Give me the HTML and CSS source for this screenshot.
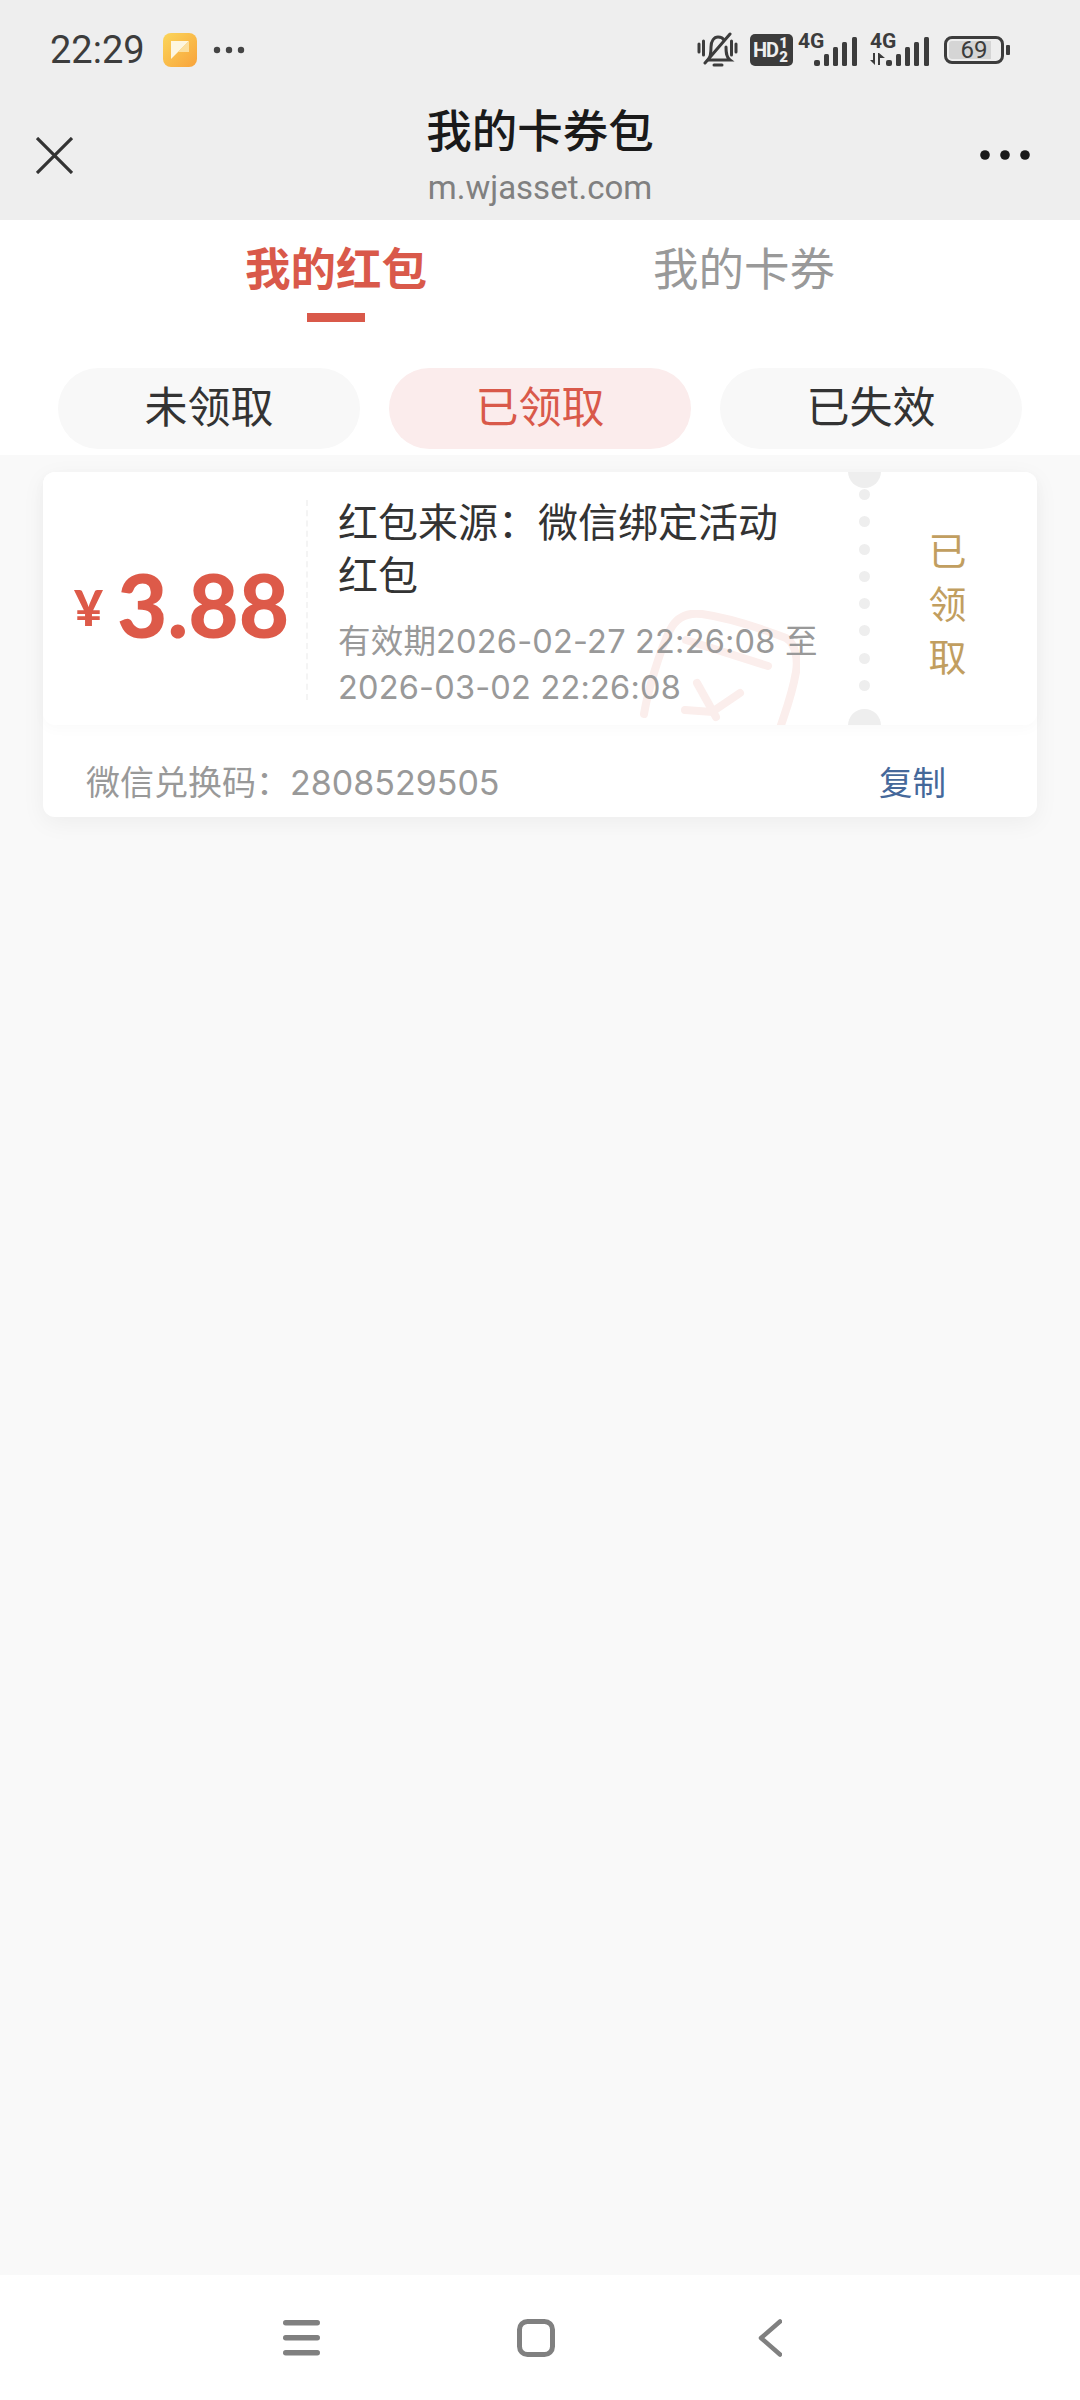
FILE: index.html
```html
<!DOCTYPE html>
<html lang="zh-CN">
<head>
    <meta charset="UTF-8">
    <meta name="viewport" content="width=device-width, initial-scale=1.0">
    <title>我的卡券包</title>
    <link rel="stylesheet" href="styles.css">
</head>
<body>
    <div class="top-bar">
        <div class="status-bar">
            <div class="status-left">
                <span class="time">22:29</span>
                <svg class="app-icon" width="34" height="34" viewBox="0 0 34 34">
                    <defs>
                        <linearGradient id="appBg" x1="0" y1="0" x2="1" y2="1">
                            <stop offset="0" stop-color="#fbd65a"/>
                            <stop offset="1" stop-color="#f8a23a"/>
                        </linearGradient>
                    </defs>
                    <rect width="34" height="34" rx="8" fill="url(#appBg)"/>
                    <path d="M8 8H26L8 26Z" fill="#fdf6e0"/>
                    <path d="M26 8V19H15Z" fill="#fbdf9e"/>
                </svg>
                <svg width="32" height="8" viewBox="0 0 32 8"><circle cx="4" cy="4" r="3.2" fill="#444"/><circle cx="16" cy="4" r="3.2" fill="#444"/><circle cx="28" cy="4" r="3.2" fill="#444"/></svg>
            </div>
            <div class="status-right">
                <svg class="bell" width="41" height="36" viewBox="0 0 41 36" fill="none" stroke="#3c3c3c" stroke-width="3" stroke-linecap="round">
                    <path d="M2 12V20M6.500 9V23M39 12V20M34.500 9V23"/>
                    <path d="M11 28C14 25 14 20 14 15C14 9 17 5 21 5C24 5 26 6 27 8M29 15C29 20 29 25 33 28H11"/>
                    <path d="M17 33H25"/>
                    <path d="M8 31L33 2"/>
                </svg>
                <div class="hd-badge"><span class="hd-text">HD</span><span class="hd-sims"><b>1</b><b>2</b></span></div>
                <div class="signal">
                    <span class="net-label">4G</span>
                    <svg width="44" height="29" viewBox="0 0 44 29" fill="#3c3c3c"><rect x="0" y="23" width="6" height="6" rx="2"/><rect x="10" y="17" width="5" height="12" rx="1.500"/><rect x="19" y="10" width="5" height="19" rx="1.500"/><rect x="28" y="5" width="5" height="24" rx="1.500"/><rect x="38" y="0" width="5" height="29" rx="1.500"/></svg>
                </div>
                <div class="signal">
                    <span class="net-label">4G</span>
                    <svg class="updown" width="15" height="12" viewBox="0 0 15 12" fill="#3c3c3c"><path d="M5 0V12L0 7H3V0ZM8 0V12H10V5H15L9 0Z"/></svg>
                    <svg width="44" height="29" viewBox="0 0 44 29" fill="#3c3c3c"><rect x="0" y="23" width="6" height="6" rx="2"/><rect x="10" y="17" width="5" height="12" rx="1.500"/><rect x="19" y="10" width="5" height="19" rx="1.500"/><rect x="28" y="5" width="5" height="24" rx="1.500"/><rect x="38" y="0" width="5" height="29" rx="1.500"/></svg>
                </div>
                <div class="battery">
                    <div class="battery-body"><div class="battery-fill"></div><span class="battery-num">69</span></div>
                    <div class="battery-nub"></div>
                </div>
            </div>
        </div>
        <div class="nav-bar">
            <svg class="close" width="37" height="37" viewBox="0 0 37 37" stroke="#333" stroke-width="3.200"><path d="M1 1L36 36M36 1L1 36"/></svg>
            <div class="nav-title">
                <div class="title">我的卡券包</div>
                <div class="url">m.wjasset.com</div>
            </div>
            <svg class="more" width="50" height="10" viewBox="0 0 50 10" fill="#1a1a1a"><circle cx="5" cy="5" r="4.800"/><circle cx="25" cy="5" r="4.800"/><circle cx="45" cy="5" r="4.800"/></svg>
        </div>
    </div>

    <div class="filters">
        <div class="tabs">
            <div class="tab active">我的红包</div>
            <div class="tab">我的卡券</div>
        </div>
        <div class="pills">
            <div class="pill">未领取</div>
            <div class="pill selected">已领取</div>
            <div class="pill">已失效</div>
        </div>
    </div>

    <main class="content">
        <div class="card">
            <div class="ticket">
                <div class="amount"><span class="yen">¥</span><span class="value">3.88</span></div>
                <div class="info">
                    <div class="source">红包来源：微信绑定活动<br>红包</div>
                    <div class="validity">有效期2026-02-27 22:26:08 至<br>2026-03-02 22:26:08</div>
                </div>
                <div class="perforation">
                    <i></i><i></i><i></i><i></i><i></i><i></i><i></i><i></i>
                </div>
                <div class="stub">已<br>领<br>取</div>
                <svg class="stamp" width="160" height="116" viewBox="0 0 160 116" fill="none" stroke="#fbeeec" stroke-width="8" stroke-linecap="round">
                    <path d="M4 104C8 80 20 40 30 20C36 8 46 2 62 4C90 8 125 20 146 28C156 34 158 50 156 62C152 85 146 100 140 118"/>
                    <path d="M57 73L76 107"/>
                    <path d="M100 83L72 102L45 100"/>
                    <path d="M46 30L128 56"/>
                </svg>
                <div class="notch notch-top"></div>
                <div class="notch notch-bottom"></div>
            </div>
            <div class="code-row">
                <span class="code">微信兑换码：2808529505</span>
                <span class="copy">复制</span>
            </div>
        </div>
    </main>

    <div class="sys-nav">
        <svg width="37" height="36" viewBox="0 0 37 36" fill="#808080"><rect y="0" width="37" height="5.500" rx="2.700"/><rect y="15" width="37" height="5.500" rx="2.700"/><rect y="30" width="37" height="5.500" rx="2.700"/></svg>
        <svg class="home" width="38" height="38" viewBox="0 0 38 38" fill="none" stroke="#808080" stroke-width="5"><rect x="2.500" y="2.500" width="33" height="33" rx="8"/></svg>
        <svg class="back" width="24" height="38" viewBox="0 0 24 38" fill="none" stroke="#808080" stroke-width="4.500" stroke-linecap="round" stroke-linejoin="round"><path d="M22 2.500L3 19L22 35.500"/></svg>
    </div>
</body>
</html>
```

FILE: styles.css
```css
* {
    box-sizing: border-box;
}
body {
    margin: 0;
    width: 1080px;
    height: 2400px;
    display: flex;
    flex-direction: column;
    background: #f9f9f9;
    color: #222;
    font-family: Roboto, "Noto Sans CJK SC", sans-serif;
}
.top-bar {
    height: 220px;
    background: #eeeeee;
    flex-shrink: 0;
}
.status-bar {
    height: 100px;
    padding: 0 70px 0 50px;
    display: flex;
    justify-content: space-between;
    align-items: center;
}
.status-left {
    display: flex;
    align-items: center;
}
.time {
    font-size: 38px;
    color: #3c3c3c;
    width: 113px;
}
.app-icon {
    margin-right: 16px;
}
.status-right {
    display: flex;
    align-items: center;
    color: #3c3c3c;
}
.bell {
    margin-right: 12px;
}
.hd-badge {
    width: 43px;
    height: 32px;
    margin-right: 5px;
    padding-left: 3px;
    display: flex;
    align-items: center;
    background: #3c3c3c;
    border-radius: 5px;
    color: #eee;
    font-weight: 700;
    font-size: 20px;
    line-height: 1;
}
.hd-text {
    letter-spacing: -1px;
}
.hd-sims {
    margin-left: 1px;
    display: flex;
    flex-direction: column;
    font-size: 15px;
    line-height: 14px;
}
.hd-sims b {
    display: block;
}
.signal {
    position: relative;
    width: 60px;
    height: 32px;
    margin-right: 12px;
    display: flex;
    justify-content: flex-end;
    align-items: flex-end;
}
.net-label {
    position: absolute;
    left: 0;
    top: -2px;
    font-size: 21px;
    font-weight: 700;
    line-height: 18px;
}
.updown {
    position: absolute;
    left: 0;
    bottom: 1px;
}
.battery {
    display: flex;
    align-items: center;
    gap: 2px;
    margin-left: 2px;
}
.battery-body {
    position: relative;
    width: 60px;
    height: 28px;
    border: 3px solid #3c3c3c;
    border-radius: 8px;
    padding: 2px;
}
.battery-fill {
    width: 42px;
    height: 100%;
    background: #d5d5d5;
    border-radius: 3px 0 0 3px;
}
.battery-num {
    position: absolute;
    inset: 0;
    text-align: center;
    font-size: 24px;
    line-height: 22px;
}
.battery-nub {
    width: 4px;
    height: 10px;
    background: #3c3c3c;
    border-radius: 1px;
}
.nav-bar {
    height: 120px;
    padding: 0 36px 10px;
    display: grid;
    grid-template-columns: 1fr auto 1fr;
    align-items: center;
}
.more {
    justify-self: end;
    margin-right: 14px;
}
.nav-title {
    text-align: center;
    margin-top: 2px;
}
.title {
    font-size: 45.500px;
    line-height: 58px;
    color: #1a1a1a;
    font-weight: 500;
}
.url {
    font-size: 33px;
    line-height: 40px;
    margin-top: 6px;
    color: #808080;
}

.filters {
    height: 235px;
    background: #fff;
    flex-shrink: 0;
}
.tabs {
    height: 148px;
    padding-top: 22px;
    display: flex;
    justify-content: center;
}
.tab {
    position: relative;
    width: 408px;
    height: 58px;
    text-align: center;
    font-size: 45.500px;
    line-height: 58px;
    color: #999;
}
.tab.active {
    color: #d9594a;
    font-weight: 700;
}
.tab.active::after {
    content: "";
    position: absolute;
    left: 175px;
    top: 71px;
    width: 58px;
    height: 9px;
    background: #d9594a;
}
.pills {
    padding: 0 58px;
    display: flex;
    gap: 29px;
}
.pill {
    flex: 1;
    height: 81px;
    border-radius: 41px;
    background: #f8f8f8;
    text-align: center;
    font-size: 43px;
    line-height: 80px;
    color: #333;
}
.pill.selected {
    background: #fbecec;
    color: #d9594a;
}

.content {
    flex: 1;
    padding: 17px 43px 0;
}
.card {
    background: #fff;
    border-radius: 12px;
    box-shadow: 0 6px 24px rgba(0, 0, 0, 0.05);
}
.ticket {
    position: relative;
    height: 253px;
    display: flex;
    overflow: hidden;
    border-radius: 12px;
    background: #fff;
    box-shadow: 0 4px 14px rgba(0, 0, 0, 0.025);
}
.amount {
    width: 263px;
    padding: 12px 0 0 31px;
    display: flex;
    align-items: center;
    color: #dd5a49;
    font-family: Lato, sans-serif;
    font-weight: 900;
    white-space: nowrap;
}
.yen {
    font-size: 50px;
    margin-right: 14px;
    margin-top: 4px;
}
.value {
    font-size: 87px;
}
.info {
    position: relative;
    z-index: 1;
    width: 558px;
    margin: 28px 0 25px;
    padding: 0 0 0 30px;
    border-left: 2px dashed #f4f4f4;
    white-space: nowrap;
}
.source {
    font-size: 40px;
    line-height: 53px;
    color: #333;
    margin-top: -3px;
}
.validity {
    font-family: Inter, "Noto Sans CJK SC", sans-serif;
    font-size: 32.500px;
    letter-spacing: 0.200px;
    line-height: 46px;
    color: #999;
    margin-top: 16px;
}
.perforation {
    width: 11px;
    margin: 17px 0 0 -5px;
    display: flex;
    flex-direction: column;
    gap: 16.300px;
}
.perforation i {
    display: block;
    width: 11px;
    height: 11px;
    border-radius: 50%;
    background: #eeeeee;
}
.stub {
    flex: 1;
    padding: 54px 17px 0 0;
    text-align: center;
    font-size: 38px;
    line-height: 53px;
    color: #c19e60;
    margin-left: 5px;
}
.stamp {
    position: absolute;
    left: 597px;
    top: 138px;
}
.notch {
    position: absolute;
    left: 805px;
    width: 33px;
    height: 33px;
    border-radius: 50%;
    background: #eeeeee;
}
.notch-top {
    top: -17px;
}
.notch-bottom {
    bottom: -17px;
}
.code-row {
    height: 92px;
    padding: 18px 91px 0 43px;
    display: flex;
    justify-content: space-between;
    align-items: center;
}
.code {
    font-family: Inter, "Noto Sans CJK SC", sans-serif;
    font-size: 34px;
    color: #999;
}
.copy {
    font-size: 33.500px;
    color: #45689a;
}

.sys-nav {
    height: 125px;
    background: #fff;
    flex-shrink: 0;
    padding: 0 0 0 283px;
    display: flex;
    align-items: center;
}
.home {
    margin-left: 197px;
}
.back {
    margin-left: 203px;
}
```
